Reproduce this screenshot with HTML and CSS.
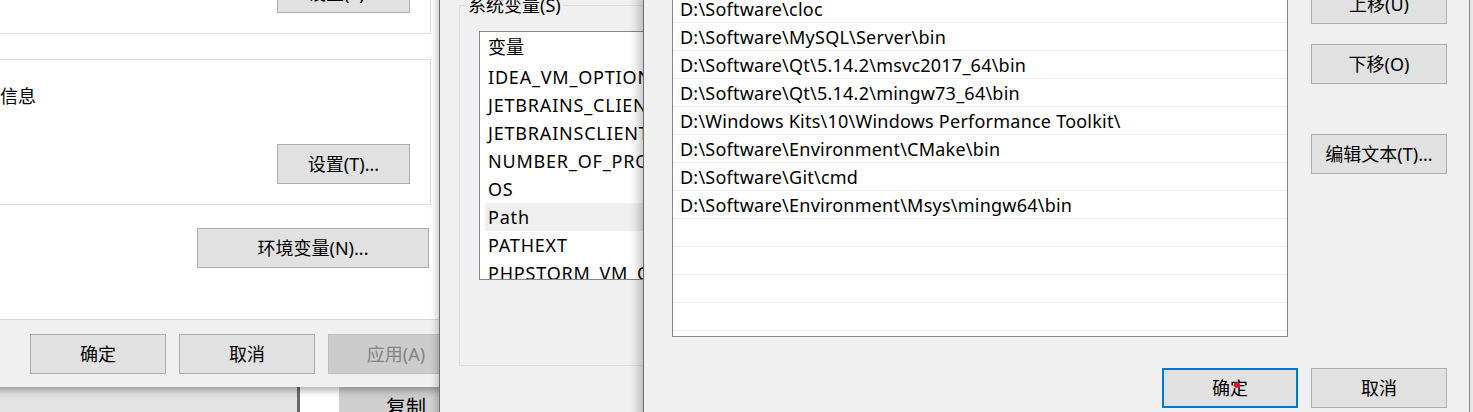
FILE: index.html
```html
<!DOCTYPE html>
<html lang="zh-CN">
<head>
    <meta charset="UTF-8">
    <meta name="viewport" content="width=device-width, initial-scale=1.0">
    <title>编辑环境变量</title>
    <link rel="stylesheet" href="styles.css">
</head>
<body>
    <div class="desk">
        <!-- window partly visible under the system properties dialog -->
        <div class="behind">
            <div class="behind-left"></div>
            <div class="behind-edge"></div>
            <div class="behind-white"></div>
            <div class="behind-btn">复制</div>
        </div>

        <div class="win sysprops">
            <div class="page">
                <div class="group group-top">
                    <button class="btn btn-set">设置(S)...</button>
                </div>
                <div class="group group-boot">
                    <div class="group-text">系统启动、系统故障和调试信息</div>
                    <button class="btn btn-set">设置(T)...</button>
                </div>
                <button class="btn btn-env">环境变量(N)...</button>
            </div>
            <div class="footer">
                <button class="btn">确定</button>
                <button class="btn">取消</button>
                <button class="btn" disabled>应用(A)</button>
            </div>
        </div>

        <div class="win envvars">
            <fieldset class="sysvars">
                <legend>系统变量(S)</legend>
                <div class="listview">
                    <div class="lv-head">变量</div>
                    <div class="lv-row">IDEA_VM_OPTIONS</div>
                    <div class="lv-row">JETBRAINS_CLIENT_VM_OPTIONS</div>
                    <div class="lv-row">JETBRAINSCLIENT_VM_OPTIONS</div>
                    <div class="lv-row">NUMBER_OF_PROCESSORS</div>
                    <div class="lv-row">OS</div>
                    <div class="lv-row selected">Path</div>
                    <div class="lv-row">PATHEXT</div>
                    <div class="lv-row">PHPSTORM_VM_OPTIONS</div>
                </div>
            </fieldset>
        </div>

        <div class="win editvar">
            <div class="edit-body">
                <div class="pathlist">
                    <div class="path-row">D:\Software\cloc</div>
                    <div class="path-row">D:\Software\MySQL\Server\bin</div>
                    <div class="path-row">D:\Software\Qt\5.14.2\msvc2017_64\bin</div>
                    <div class="path-row">D:\Software\Qt\5.14.2\mingw73_64\bin</div>
                    <div class="path-row">D:\Windows Kits\10\Windows Performance Toolkit\</div>
                    <div class="path-row">D:\Software\Environment\CMake\bin</div>
                    <div class="path-row">D:\Software\Git\cmd</div>
                    <div class="path-row">D:\Software\Environment\Msys\mingw64\bin</div>
                    <div class="path-row"></div>
                    <div class="path-row"></div>
                    <div class="path-row"></div>
                    <div class="path-row"></div>
                </div>
                <div class="side-btns">
                    <button class="btn">上移(U)</button>
                    <button class="btn">下移(O)</button>
                    <button class="btn btn-gap">编辑文本(T)...</button>
                </div>
            </div>
            <div class="footer edit-footer">
                <button class="btn btn-default">确定</button>
                <button class="btn">取消</button>
            </div>
        </div>

        <span class="cursor-dot"></span>
    </div>
</body>
</html>
```

FILE: styles.css
```css
* {
    box-sizing: border-box;
}

body {
    margin: 0;
    background-color: #f0f0f0;
    font-family: "Noto Sans", "Noto Sans CJK SC", sans-serif;
    font-size: 18px;
    line-height: 24px;
    color: #000;
}

.desk {
    position: relative;
    width: 1473px;
    height: 412px;
    overflow: hidden;
}

.win {
    position: absolute;
    background-color: #f0f0f0;
}

.btn {
    width: 136px;
    height: 40px;
    padding: 0;
    border: 1px solid #adadad;
    background-color: #e1e1e1;
    font: inherit;
    color: #000;
    white-space: nowrap;
}

.btn:disabled {
    background-color: #cccccc;
    border-color: #bfbfbf;
    color: #838383;
}

/* behind everything */
.behind {
    position: absolute;
    left: 0;
    top: 370px;
    width: 440px;
    height: 42px;
    display: flex;
}

.behind-left {
    width: 297px;
    background-color: #e4e4e4;
}

.behind-edge {
    width: 3px;
    background-color: #6a6a6a;
}

.behind-white {
    width: 39px;
    background-color: #fff;
}

.behind-btn {
    flex: 1;
    background-color: #cfcfcf;
    padding: 25px 0 0 47px;
    font-size: 20px;
    line-height: 26px;
}

/* system properties */
.sysprops {
    left: -240px;
    top: -60px;
    width: 717px;
    height: 447px;
    display: flex;
    flex-direction: column;
    box-shadow: 0 3px 8px rgba(0, 0, 0, 0.35);
}

.page {
    height: 380px;
    flex: none;
    background-color: #fff;
    border-bottom: 1px solid #dadada;
    padding: 10px 46px 0 12px;
    display: flex;
    flex-direction: column;
}

.group {
    border: 1px solid #dcdcdc;
}

.group-top {
    height: 84px;
    display: flex;
    justify-content: flex-end;
    align-items: flex-end;
    padding: 0 20px 20px 0;
}

.group-boot {
    height: 146px;
    margin-top: 25px;
    display: flex;
    flex-direction: column;
    align-items: flex-start;
    padding: 24px 20px 20px 11px;
}

.group-boot .btn {
    align-self: flex-end;
    margin-top: auto;
}

.btn-set {
    width: 133px;
}

.btn-env {
    width: 232px;
    align-self: flex-end;
    margin: 23px 2px 0 0;
}

.footer {
    flex: 1;
    display: flex;
    justify-content: flex-end;
    gap: 13px;
    padding: 14px 13px 0 0;
}

/* environment variables, only the strip left of the edit dialog shows */
.envvars {
    left: 439px;
    top: -40px;
    width: 210px;
    height: 480px;
    overflow: hidden;
    border-left: 1px solid #6e6e6e;
    box-shadow: -3px 0 6px rgba(0, 0, 0, 0.18);
}

.sysvars {
    width: 600px;
    margin: 33px 0 0 19px;
    padding: 0 0 85px 0;
    border: 1px solid #dcdcdc;
    min-width: 0;
}

.sysvars legend {
    margin-left: 6px;
    padding: 0 2px;
    line-height: 24px;
}

.listview {
    margin: 14px 0 0 19px;
    width: 560px;
    height: 249px;
    border: 1px solid #828790;
    background-color: #fff;
    overflow: hidden;
    white-space: nowrap;
}

.lv-head {
    height: 31px;
    line-height: 31px;
    padding-left: 8px;
}

.lv-row {
    height: 28px;
    line-height: 28px;
    margin-left: 5px;
    padding-left: 3px;
    letter-spacing: 0.8px;
}

.lv-row.selected {
    background-color: #efefef;
}

/* edit environment variable */
.editvar {
    left: 643px;
    top: -30px;
    width: 827px;
    height: 460px;
    border-left: 1px solid #6b6b6b;
    border-right: 1px solid #8a8a8a;
    box-shadow: -4px 0 10px rgba(0, 0, 0, 0.25);
}

.edit-body {
    display: flex;
    gap: 23px;
    padding-left: 28px;
}

.pathlist {
    width: 616px;
    height: 343px;
    margin-top: 24px;
    border: 1px solid #828790;
    background-color: #fff;
    overflow: hidden;
}

.path-row {
    height: 28px;
    padding: 1px 0 0 7px;
    line-height: 26px;
    letter-spacing: 0.23px;
    border-bottom: 1px solid #efefef;
    white-space: nowrap;
}

.side-btns {
    display: flex;
    flex-direction: column;
    gap: 20px;
    margin-top: 14px;
}

.side-btns .btn-gap {
    margin-top: 30px;
}

.edit-footer {
    padding: 31px 22px 0 0;
}

.btn-default {
    border: 2px solid #0078d7;
}

.cursor-dot {
    position: absolute;
    left: 1234px;
    top: 382px;
    width: 6px;
    height: 6px;
    border-radius: 50%;
    background-color: #e81123;
}
```
